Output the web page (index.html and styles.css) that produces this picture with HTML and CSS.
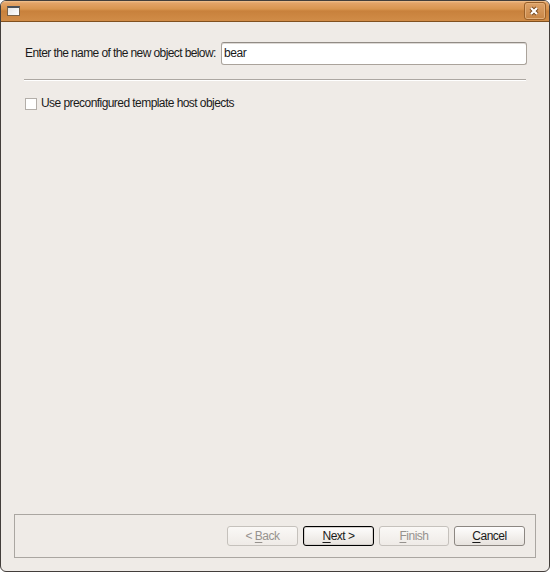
FILE: index.html
```html
<!DOCTYPE html>
<html lang="en">
<head>
<meta charset="utf-8">
<title>New object</title>
<link rel="stylesheet" href="styles.css">
</head>
<body>
<div class="window">
  <header class="titlebar">
    <span class="window-icon"></span>
    <button class="close" type="button">
      <svg width="10" height="10" viewBox="0 0 10 10"><path class="close-shadow" d="M2 2L8 8M8 2L2 8"/><path class="close-mark" d="M2 2L8 8M8 2L2 8"/></svg>
    </button>
  </header>
  <main class="content">
    <div class="name-row">
      <label class="name-label" for="name">Enter the name of the new object below:</label>
      <input class="name-input" id="name" type="text" value="bear">
    </div>
    <div class="separator"></div>
    <label class="check-row"><span class="checkbox"></span><span class="check-text">Use preconfigured template host objects</span></label>
  </main>
  <footer class="actions">
    <button class="btn disabled" type="button"><span>&lt; <u>B</u>ack</span></button>
    <button class="btn default" type="button"><span><u>N</u>ext &gt;</span></button>
    <button class="btn disabled finish" type="button"><span><u>F</u>inish</span></button>
    <button class="btn" type="button"><span><u>C</u>ancel</span></button>
  </footer>
</div>
</body>
</html>
```
FILE: styles.css
```css
* { box-sizing: border-box; }
body { margin: 0; background: #fff; font: 12px/14px "Liberation Sans", Arial, sans-serif; letter-spacing: -0.6px; color: #1a1a1a; }
button, input { font: inherit; letter-spacing: inherit; color: inherit; margin: 0; outline: none; }
.window { width: 550px; height: 572px; border: 1px solid #433e3b; border-radius: 6px; background: #efebe7; display: flex; flex-direction: column; overflow: hidden; }
.titlebar { flex: none; height: 21px; display: flex; align-items: center; justify-content: space-between; padding: 0 3px 0 6px; border-bottom: 1px solid #80501f; background: linear-gradient(#f2c391 0, #e3a367 2px, #d9954f 8px, #c8813c 10px, #d08b46 19px); }
.window-icon { width: 13px; height: 10px; border: 1px solid #7b6348; border-top: 2px solid #4b5058; background: linear-gradient(135deg, #e4e4e4, #fff); }
.close { width: 22px; height: 18px; padding: 0; border: 1px solid #9a6029; border-radius: 3px; background: linear-gradient(#dda269, #c78545); box-shadow: inset 0 0 0 1px #e2ae78; display: flex; align-items: center; justify-content: center; }
.close svg { display: block; fill: none; margin-right: 2px; }
.close-shadow { stroke: #75471f; stroke-width: 4; }
.close-mark { stroke: #fff; stroke-width: 2.2; }
.content { flex: 1; padding: 20px 22px 0 23px; }
.name-row { display: flex; align-items: center; height: 23px; }
.name-label { width: 197px; white-space: nowrap; padding: 0 0 2px 1px; }
.name-input { flex: 1; min-width: 0; height: 23px; padding: 0 2px 2px; border: 1px solid #aaa39b; border-top-color: #918b85; border-radius: 3px; background: #fff; box-shadow: inset 0 1px #ddd9d5; letter-spacing: -0.45px; }
.separator { height: 2px; margin: 14px 1px 0 0; border-top: 1px solid #aca7a2; border-bottom: 1px solid #fff; }
.check-row { display: flex; align-items: center; margin: 15px 0 0 1px; height: 14px; letter-spacing: -0.56px; }
.checkbox { width: 12px; height: 12px; border: 1px solid #b3aea9; background: #fff; margin-top: 2px; }
.check-text { margin-left: 4px; }
.actions { height: 44px; margin: 0 13px 13px; padding: 0 10px; border: 1px solid #aaa6a1; display: flex; align-items: center; justify-content: flex-end; gap: 5px; letter-spacing: -0.5px; }
.btn { width: 71px; height: 20px; padding: 0 0 1px; border: 1px solid #8c8782; border-radius: 3px; background: linear-gradient(#fefdfd, #f2efec 55%, #e7e3de); line-height: 14px; }
.btn.finish { width: 70px; }
.btn u { text-underline-offset: 2px; text-decoration-thickness: 1px; }
.btn.disabled { border-color: #c5c1bc; color: #96928e; background: linear-gradient(#faf8f6, #efebe7); }
.btn.default { border-color: #000; box-shadow: inset 0 0 0 1px #d5d1cd; }
```
